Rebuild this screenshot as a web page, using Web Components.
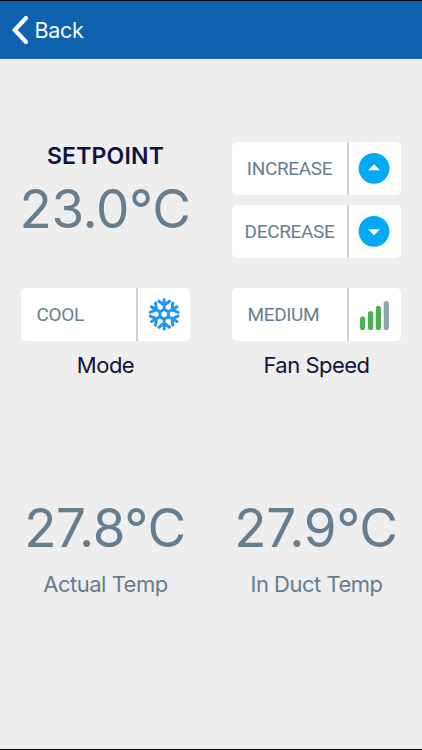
<!DOCTYPE html>
<html lang="en">
<head>
<meta charset="utf-8">
<title>Setpoint</title>
<style>
  html, body { margin: 0; height: 100%; }
  body { background: #eee; overflow: hidden; font-family: Inter, "Liberation Sans", sans-serif; }
</style>
</head>
<body>
<climate-screen></climate-screen>

<script>
// <nav-bar>Back</nav-bar> — blue top bar with a back chevron.
class NavBar extends HTMLElement {
  constructor() {
    super();
    this.attachShadow({ mode: "open" });
    this.shadowRoot.innerHTML = `
      <style>
        :host {
          display: flex;
          align-items: center;
          box-sizing: border-box;
          height: 59px;
          padding: 0 0 1px 11px;
          border-top: 1px solid #02040c;
          background: #0f62b0;
          color: #f4faff;
          font-size: 21.5px;
        }
        svg { display: block; margin-right: 5.5px; }
        span { letter-spacing: -0.3px; }
      </style>
      <svg width="18" height="30" viewBox="0 0 18 30">
        <path d="M15 3 L3.8 15 L15 27" fill="none" stroke="#fff" stroke-width="4.2" stroke-linecap="round" stroke-linejoin="miter"/>
      </svg>
      <span><slot></slot></span>
    `;
  }
}

// <temp-reading value="23.0°C"> — large temperature figure.
class TempReading extends HTMLElement {
  constructor() {
    super();
    this.attachShadow({ mode: "open" });
  }

  connectedCallback() {
    this.shadowRoot.innerHTML = `
      <style>
        :host {
          display: block;
          height: 60px;
          padding-right: 1px;
          line-height: 60px;
          text-align: center;
          white-space: nowrap;
          color: #667d8e;
          font-size: 53px;
          font-weight: 400;
          letter-spacing: -0.4px;
        }
      </style>
      ${this.getAttribute("value")}
    `;
  }
}

const ICONS = {
  up: `
    <circle cx="18" cy="18.3" r="15.4" fill="#03a9f4"/>
    <path d="M12 20.3 L18 14.3 L24 20.3 Z" fill="#fff"/>`,
  down: `
    <circle cx="18" cy="18.3" r="15.4" fill="#03a9f4"/>
    <path d="M12 16.3 L24 16.3 L18 22.3 Z" fill="#fff"/>`,
  snow: `
    <g fill="none" stroke="#2196f3" stroke-width="3" stroke-linecap="round" stroke-linejoin="round">
      <path d="M19.2 13.3 L23.4 15.8 V20.7 L19.2 23.2 L15 20.7 V15.8 Z"/>
      ${[0, 60, 120, 180, 240, 300].map(a =>
        `<path transform="rotate(${a} 19.2 18.2)" d="M19.2 13 V3.5 M13.9 5.2 L19.2 9.2 L24.5 5.2"/>`
      ).join("")}
    </g>`,
  bars: `
    <g fill="#4caf50">
      <rect x="4" y="20.5" width="5.2" height="13.5" rx="2.6"/>
      <rect x="12" y="14.9" width="5.2" height="19.1" rx="2.6"/>
      <rect x="19.8" y="9.8" width="5.2" height="24.2" rx="2.6"/>
    </g>
    <rect x="27.7" y="5" width="5.2" height="29" rx="2.6" fill="#90a4ae"/>`,
};

// <action-button icon="up">INCREASE</action-button>
class ActionButton extends HTMLElement {
  constructor() {
    super();
    this.attachShadow({ mode: "open" });
  }

  connectedCallback() {
    this.shadowRoot.innerHTML = `
      <style>
        :host {
          display: flex;
          width: 169px;
          height: 53px;
          border-radius: 5px;
          overflow: hidden;
          background: #fff;
          color: #667f8d;
          font: 19px/53px Roboto, sans-serif;
        }
        .label {
          box-sizing: border-box;
          width: 115px;
          text-align: center;
          white-space: nowrap;
          letter-spacing: -0.35px;
        }
        :host([align="left"]) .label { padding-left: 15.5px; text-align: left; }
        .icon {
          display: flex;
          flex: 1;
          align-items: center;
          justify-content: center;
          padding: 0 3px 1px 0;
          border-left: 2px solid #d0d0d0;
        }
        svg { display: block; }
      </style>
      <div class="label"><slot></slot></div>
      <div class="icon"><svg width="36" height="36" viewBox="0 0 36 36">${ICONS[this.getAttribute("icon")]}</svg></div>
    `;
  }
}

class ClimateScreen extends HTMLElement {
  constructor() {
    super();
    this.attachShadow({ mode: "open" });
    this.shadowRoot.innerHTML = `
      <style>
        :host {
          display: flex;
          flex-direction: column;
          box-sizing: border-box;
          height: 750px;
          border-bottom: 1px solid #000;
        }
        .row { display: grid; grid-template-columns: 211px 211px; }
        .setpoint { margin-top: 83px; height: 146px; }
        .controls { height: 210px; }
        .title {
          height: 28px;
          line-height: 28px;
          text-align: center;
          color: #10133f;
          font-size: 23px;
          font-weight: 600;
          letter-spacing: 0.2px;
        }
        .setpoint temp-reading { margin-top: 9px; }
        .buttons { display: flex; flex-direction: column; gap: 10px; }
        action-button { margin-left: 21px; }
        .caption {
          height: 28px;
          margin-top: 10px;
          line-height: 28px;
          text-align: center;
          color: #10133f;
          font-size: 22px;
          letter-spacing: -0.5px;
        }
        .muted { color: #667d8e; margin-top: 12px; }
      </style>
      <nav-bar>Back</nav-bar>
      <div class="row setpoint">
        <div>
          <div class="title">SETPOINT</div>
          <temp-reading value="23.0°C"></temp-reading>
        </div>
        <div class="buttons">
          <action-button icon="up">INCREASE</action-button>
          <action-button icon="down">DECREASE</action-button>
        </div>
      </div>
      <div class="row controls">
        <div>
          <action-button icon="snow" align="left">COOL</action-button>
          <div class="caption">Mode</div>
        </div>
        <div>
          <action-button icon="bars" align="left">MEDIUM</action-button>
          <div class="caption">Fan Speed</div>
        </div>
      </div>
      <div class="row">
        <div>
          <temp-reading value="27.8°C"></temp-reading>
          <div class="caption muted">Actual Temp</div>
        </div>
        <div>
          <temp-reading value="27.9°C"></temp-reading>
          <div class="caption muted">In Duct Temp</div>
        </div>
      </div>
    `;
  }
}

customElements.define("nav-bar", NavBar);
customElements.define("temp-reading", TempReading);
customElements.define("action-button", ActionButton);
customElements.define("climate-screen", ClimateScreen);
</script>
</body>
</html>
